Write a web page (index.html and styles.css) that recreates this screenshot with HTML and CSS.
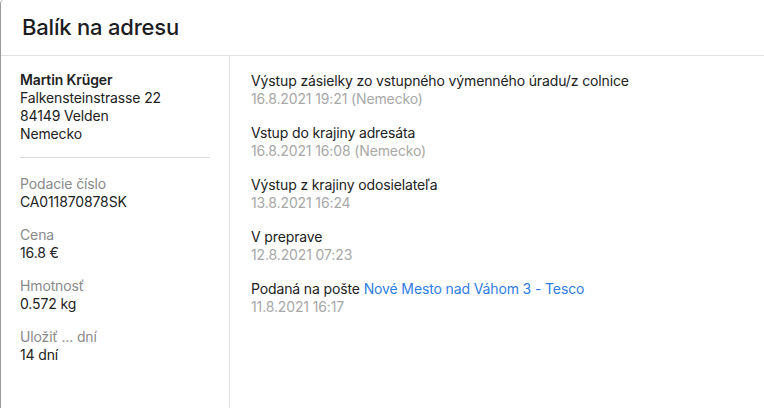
FILE: index.html
```html
<!DOCTYPE html>
<html lang="sk">
<head>
<meta charset="utf-8">
<title>Balík na adresu</title>
<link rel="stylesheet" href="styles.css">
</head>
<body>
<div class="modal">
  <header class="modal-header">
    <h1 class="title">Balík na adresu</h1>
  </header>
  <div class="modal-body">
    <aside class="info">
      <div class="address">
        <div class="name">Martin Krüger</div>
        <div>Falkensteinstrasse 22</div>
        <div>84149 Velden</div>
        <div>Nemecko</div>
      </div>
      <hr class="sep">
      <div class="field">
        <div class="label">Podacie číslo</div>
        <div class="value">CA011870878SK</div>
      </div>
      <div class="field">
        <div class="label">Cena</div>
        <div class="value">16.8 €</div>
      </div>
      <div class="field">
        <div class="label">Hmotnosť</div>
        <div class="value">0.572 kg</div>
      </div>
      <div class="field">
        <div class="label">Uložiť ... dní</div>
        <div class="value">14 dní</div>
      </div>
    </aside>
    <section class="events">
      <div class="event">
        <div class="event-title">Výstup zásielky zo vstupného výmenného úradu/z colnice</div>
        <div class="event-date">16.8.2021 19:21 (Nemecko)</div>
      </div>
      <div class="event">
        <div class="event-title">Vstup do krajiny adresáta</div>
        <div class="event-date">16.8.2021 16:08 (Nemecko)</div>
      </div>
      <div class="event">
        <div class="event-title">Výstup z krajiny odosielateľa</div>
        <div class="event-date">13.8.2021 16:24</div>
      </div>
      <div class="event">
        <div class="event-title">V preprave</div>
        <div class="event-date">12.8.2021 07:23</div>
      </div>
      <div class="event">
        <div class="event-title">Podaná na pošte <a class="link" href="#">Nové Mesto nad Váhom 3 - Tesco</a></div>
        <div class="event-date">11.8.2021 16:17</div>
      </div>
    </section>
  </div>
</div>
</body>
</html>
```
FILE: styles.css
```css
html, body {
  margin: 0;
  padding: 0;
  background: #fff;
  height: 100%;
}
body {
  font-family: Inter, "Noto Sans", sans-serif;
  font-size: 14px;
  line-height: 18px;
  color: #222;
  letter-spacing: -0.13px;
}
.modal {
  height: 408px;
  box-sizing: border-box;
  border-left: 1px solid #9a9a9a;
  border-top-left-radius: 4px;
  display: flex;
  flex-direction: column;
  background: #fff;
}
.modal-header {
  height: 56px;
  box-sizing: border-box;
  border-bottom: 1px solid #e2e2e2;
  padding: 0 21px 1px;
  display: flex;
  align-items: center;
}
.title {
  margin: 0;
  font-size: 22px;
  font-weight: 500;
  line-height: 28px;
  color: #1d1d1f;
  letter-spacing: -0.2px;
}
.modal-body {
  flex: 1;
  display: flex;
}
.info {
  width: 229px;
  box-sizing: border-box;
  border-right: 1px solid #e2e2e2;
  padding: 15px 19px 0 19px;
}
.name {
  font-weight: 600;
}
.sep {
  border: 0;
  border-top: 1px solid #dcdcdc;
  margin: 14px 0 17px;
}
.field {
  margin-bottom: 15px;
}
.label {
  color: #8a8a8a;
}
.value {
  color: #222;
}
.events {
  flex: 1;
  padding: 16px 21px 0 21px;
}
.event {
  margin-bottom: 16px;
}
.event-date {
  color: #a8a8a8;
}
.link {
  color: #2f7de1;
  text-decoration: none;
}
```
